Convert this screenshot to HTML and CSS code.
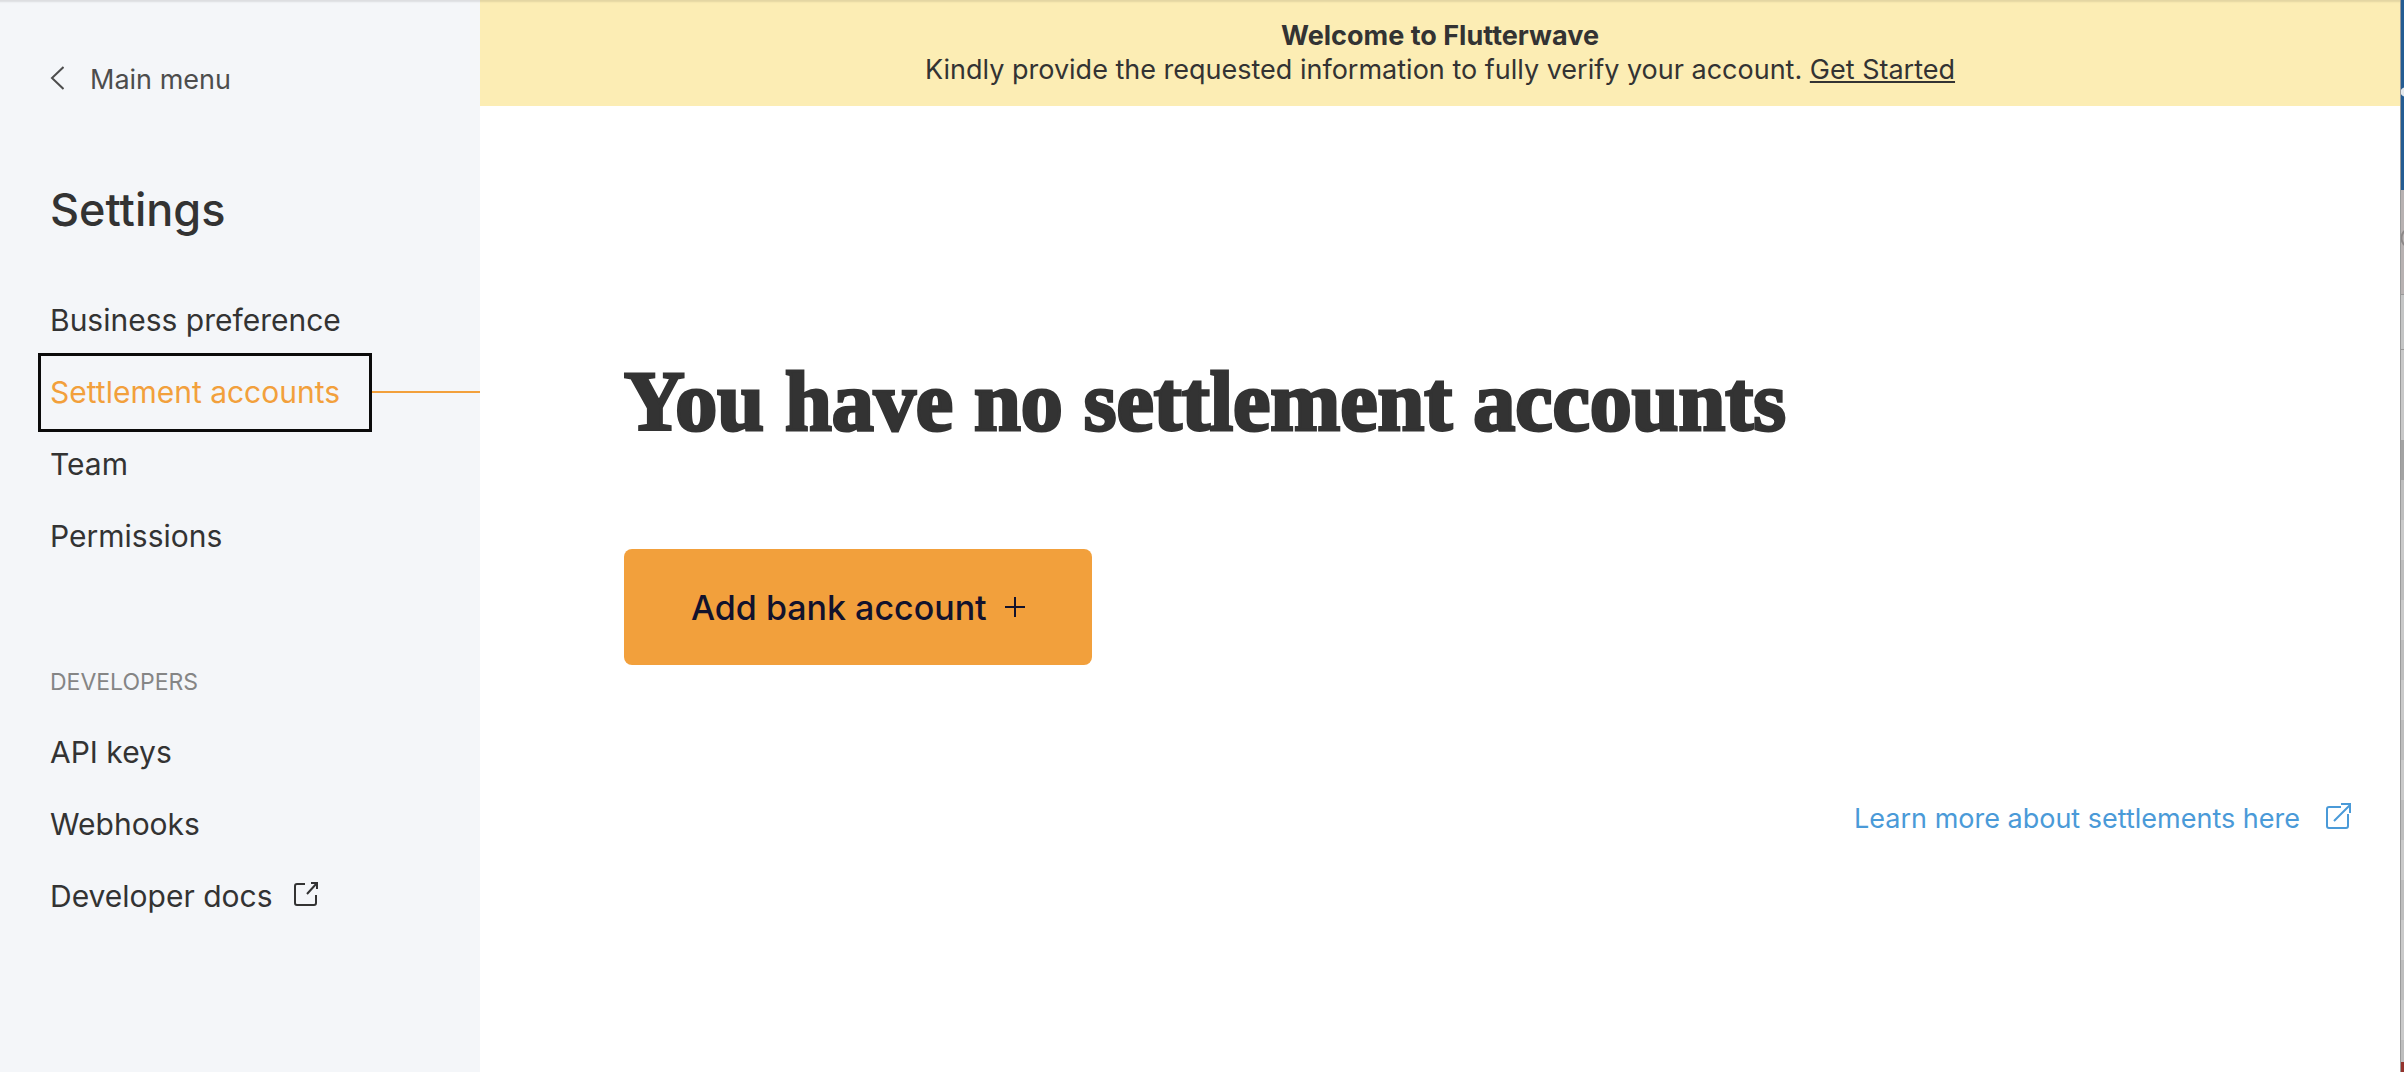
FILE: index.html
```html
<!DOCTYPE html>
<html lang="en">
<head>
  <meta charset="utf-8">
  <title>Settlement accounts</title>
  <link rel="stylesheet" href="styles.css">
</head>
<body>
  <div class="app">
    <aside class="sidebar">
      <a class="back" href="#">
        <svg class="back-icon" viewBox="0 0 14 24"><path d="M13.500 1L2 12L13.500 23"/></svg>
        Main menu
      </a>
      <h2 class="sidebar-title">Settings</h2>
      <ul class="nav">
        <li><a href="#">Business preference</a></li>
        <li class="active"><a href="#">Settlement accounts</a></li>
        <li><a href="#">Team</a></li>
        <li><a href="#">Permissions</a></li>
      </ul>
      <h3 class="nav-heading">DEVELOPERS</h3>
      <ul class="nav">
        <li><a href="#">API keys</a></li>
        <li><a href="#">Webhooks</a></li>
        <li>
          <a href="#">Developer docs
            <svg class="ext-icon" viewBox="0 0 26 26"><path d="M12 3H4Q2 3 2 5V22Q2 24 4 24H21Q23 24 23 22V14M14 13L24 2M18 2H24V8"/></svg>
          </a>
        </li>
      </ul>
    </aside>
    <div class="content">
      <div class="banner">
        <strong>Welcome to Flutterwave</strong>
        <p>Kindly provide the requested information to fully verify your account. <a href="#">Get Started</a></p>
      </div>
      <main class="main">
        <h1>You have no settlement accounts</h1>
        <button class="add-btn" type="button">
          Add bank account
          <svg class="plus-icon" viewBox="0 0 20 20"><path d="M10 0V20M0 10H20"/></svg>
        </button>
        <a class="learn" href="#">
          Learn more about settlements here
          <svg class="learn-icon" viewBox="0 0 26 28"><path d="M15 5H3Q1 5 1 7V24Q1 26 3 26H20Q22 26 22 24V12M8 19L24 3M15 2H24V11"/></svg>
        </a>
      </main>
    </div>
    <div class="edge">
      <div class="edge-top"></div>
      <div class="edge-tools"></div>
      <div class="edge-head"></div>
      <div class="edge-rows"></div>
      <div class="edge-selected"></div>
      <div class="edge-list"></div>
      <div class="edge-foot"></div>
    </div>
  </div>
</body>
</html>
```
FILE: styles.css
```css
* {
  box-sizing: border-box;
}
body {
  margin: 0;
  font-family: Inter, "Liberation Sans", sans-serif;
  color: #333;
  background: #fff;
}
h1, h2, h3, p, ul {
  margin: 0;
  padding: 0;
}
a {
  color: inherit;
  text-decoration: none;
}
svg {
  fill: none;
  stroke: currentColor;
  stroke-width: 2;
  flex: none;
}

.app {
  display: flex;
  min-height: 100vh;
}

/* sidebar */
.sidebar {
  width: 480px;
  flex: none;
  padding: 60px 0 60px 50px;
  background: #f4f6f9;
  box-shadow: inset 0 4px 2px -2px rgba(0,0,0,.1);
}
.back {
  display: flex;
  align-items: center;
  gap: 26px;
  font-size: 27px;
  line-height: 40px;
  color: #4d4d4d;
}
.back-icon {
  width: 14px;
  height: 24px;
  margin-bottom: 4px;
}
.sidebar-title {
  margin-top: 80px;
  font-size: 45px;
  line-height: 60px;
  font-weight: 500;
}
.nav {
  list-style: none;
}
.sidebar-title + .nav {
  margin-top: 44px;
}
.nav li {
  display: flex;
  align-items: center;
  height: 72px;
  font-size: 30px;
}
.nav a {
  display: flex;
  align-items: center;
  gap: 20px;
}
.nav .active a {
  height: 73px;
  margin-left: -9px;
  padding: 0 29px 0 9px;
  color: #f2a03c;
  outline: 3px solid #0b0b0b;
}
.nav .active::after {
  content: "";
  flex: 1;
  height: 2px;
  margin-left: 3px;
  background: #f2a03c;
}
.nav-heading {
  margin-top: 92px;
  font-size: 23px;
  line-height: 36px;
  font-weight: 400;
  color: #858585;
}
.nav-heading + .nav {
  margin-top: 16px;
}
.ext-icon {
  width: 26px;
  height: 26px;
  margin-bottom: 4px;
}

/* content */
.content {
  flex: 1;
}
.banner {
  padding: 19px 20px;
  text-align: center;
  font-size: 27px;
  line-height: 34px;
  background: #fcedb4;
  box-shadow: inset 0 4px 2px -2px rgba(0,0,0,.1);
}
.banner a {
  text-decoration: underline;
}
.main {
  display: flex;
  flex-direction: column;
  align-items: flex-start;
  padding: 246px 48px 0 144px;
}
.main h1 {
  font-family: "Liberation Serif", serif;
  font-size: 84px;
  line-height: 100px;
  font-weight: 700;
  -webkit-text-stroke: 3px #333;
}
.add-btn {
  display: flex;
  align-items: center;
  gap: 18px;
  height: 116px;
  margin-top: 97px;
  padding: 0 67px;
  border: none;
  border-radius: 8px;
  background: #f2a03c;
  color: #12122c;
  font: inherit;
  font-size: 34px;
  font-weight: 500;
}
.plus-icon {
  width: 20px;
  height: 20px;
}
.learn {
  display: flex;
  align-items: center;
  gap: 26px;
  align-self: flex-end;
  margin-top: 134px;
  font-size: 27px;
  line-height: 40px;
  color: #4a9ad8;
}
.learn-icon {
  width: 26px;
  height: 28px;
  margin-bottom: 6px;
}

/* window behind, at the right edge */
.edge {
  display: flex;
  flex-direction: column;
  width: 4px;
  flex: none;
  border-left: 1px solid #9a9a9a;
}
.edge-top {
  height: 190px;
  background: radial-gradient(circle at 4px 92px, #e4e8ec 4px, transparent 5px), #245c93;
}
.edge-tools {
  height: 104px;
  background: radial-gradient(circle at 10px 48px, transparent 8px, #8c8888 9px, #8c8888 10px, transparent 11px), #b8b2b2;
}
.edge-head {
  height: 56px;
  background: #c4c5c5;
  border-top: 1px solid #999;
  border-bottom: 1px solid #999;
}
.edge-rows {
  height: 90px;
  background: #c8c8c8;
}
.edge-selected {
  height: 40px;
  background: #a3a3a3;
}
.edge-list {
  flex: 1;
  background: repeating-linear-gradient(#bebebe 0 40px, #cacaca 40px 80px);
}
.edge-foot {
  height: 10px;
  background: #94322c;
}
```
